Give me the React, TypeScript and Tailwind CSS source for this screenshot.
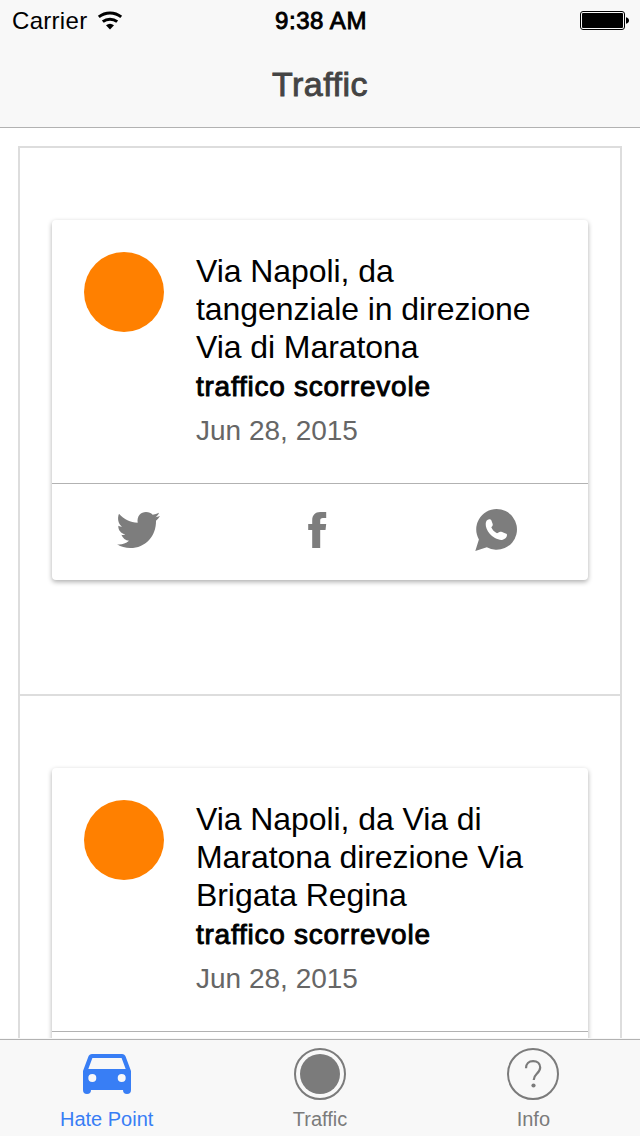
type Report = { place: string[]; status: string; date: string };

const reports: Report[] = [
  {
    place: ["Via Napoli, da", "tangenziale in direzione", "Via di Maratona"],
    status: "traffico scorrevole",
    date: "Jun 28, 2015",
  },
  {
    place: ["Via Napoli, da Via di", "Maratona direzione Via", "Brigata Regina"],
    status: "traffico scorrevole",
    date: "Jun 28, 2015",
  },
];

function WifiIcon() {
  return (
    <svg width="26" height="20" viewBox="0 0 26 20" fill="none" stroke="#000">
      <path d="M1.800 5.800a18 18 0 0 1 22.400 0" strokeWidth="3" />
      <path d="M5.800 10.700a11.500 11.500 0 0 1 14.400 0" strokeWidth="3" />
      <path d="M13 18.600l-4-4.400a6.500 6.500 0 0 1 8 0z" fill="#000" stroke="none" />
    </svg>
  );
}

function BatteryIcon() {
  return (
    <svg width="50" height="20" viewBox="0 0 50 20">
      <rect x="0.5" y="0.5" width="44" height="18" rx="2.5" fill="none" stroke="#000" />
      <rect x="2" y="2" width="41" height="15" rx="1" fill="#000" />
      <path d="M46 6.200q3 .8 3 3.300t-3 3.300z" fill="#000" />
    </svg>
  );
}

function TwitterIcon() {
  return (
    <svg width="43" height="36" viewBox="21 24 129 108" fill="#7d7d7d">
      <path d="M27 29C42 46 61 55 83 56C80 36 93 24 108 24C117 24 123 27 128 32C135 31 141 29 147 26C145 32 141 36 136 40C141 39 145 38 150 36C147 41 143 46 138 50C139 96 106 132 61 132C46 132 33 129 21 121C34 123 46 119 57 110C47 109 38 102 34 92C38 93 42 93 46 91C33 88 24 78 25 65C29 67 32 68 36 68C25 60 21 43 27 29Z" />
    </svg>
  );
}

function FacebookIcon() {
  return (
    <svg width="20" height="36" viewBox="0 0 20 36" fill="#7d7d7d">
      <path d="M18.200 6H15c-2.200 0-2.800 1-2.800 2.800V12h6l-.7 6h-5.300v18H4.200V18H.2v-6h4V8.500C4.200 3 7.300 0 12.200 0h6z" />
    </svg>
  );
}

function WhatsappIcon() {
  return (
    <svg width="44" height="44" viewBox="0 0 44 44">
      <path
        d="M21.600 1a20.400 20.400 0 1 1-9.800 38.300L.3 43.100l3.600-11.600A20.400 20.400 0 0 1 21.600 1z"
        fill="#7d7d7d"
      />
      <path
        d="M10.700 15.800c.1-2.600 1.500-4.400 3.500-4.500 1.200-.1 1.900.4 2.300 1.500l1.200 3.300c.2.700.1 1.200-.3 1.800l-1.100 1.400c1 2.500 3 4.700 5.700 6 .8-.2 1.400-1.300 2.700-1.400 1.300-.2 2.700.3 4.700 1 1.900.6 2.600 1 2.600 1.900 0 2.700-2.300 4.900-5.200 5.100-4.200.2-9.200-2.500-12.300-6.300-2.300-2.800-4-6.800-3.800-9.800z"
        fill="#fff"
      />
    </svg>
  );
}

function CarIcon() {
  return (
    <svg width="48" height="40" viewBox="0 0 48 40">
      <path
        fill="#387ef5"
        fillRule="evenodd"
        d="M9 0h30c1.800 0 3 .9 3.600 2.400L48 17v19a4 4 0 0 1-8 0H8a4 4 0 0 1-8 0V17L5.400 2.400C6 .9 7.200 0 9 0zM9.400 4L5.300 15h37.400L38.600 4zM9.300 20a4 4 0 1 0 0 8 4 4 0 0 0 0-8zm29.400 0a4 4 0 1 0 0 8 4 4 0 0 0 0-8z"
      />
    </svg>
  );
}

function RecordIcon() {
  return (
    <svg width="52" height="52" viewBox="0 0 52 52">
      <circle cx="26" cy="26" r="25" fill="none" stroke="#7b7b7b" strokeWidth="2" />
      <circle cx="26" cy="26" r="20" fill="#7b7b7b" />
    </svg>
  );
}

function HelpIcon() {
  return (
    <svg width="52" height="52" viewBox="0 0 52 52" fill="none" stroke="#7b7b7b">
      <circle cx="26" cy="26" r="25" strokeWidth="2" />
      <path
        d="M19 20.200c0-4.400 2.800-7 7.100-7 4.200 0 7.100 2.500 7.100 6.300 0 2.700-1.200 4.200-3.600 6.500-2.300 2.200-2.900 3.100-2.900 6"
        strokeWidth="2.2"
      />
      <circle cx="26.500" cy="37.500" r="2.100" fill="#7b7b7b" stroke="none" />
    </svg>
  );
}

function ReportCard({ report }: { report: Report }) {
  return (
    <article className="h-[360px] rounded-[4px] bg-white shadow-[0_2px_5px_rgba(0,0,0,0.32)]">
      <div className="flex h-[263px] gap-8 p-8">
        <div className="size-20 shrink-0 rounded-full bg-[#ff8000]" />
        <div className="whitespace-nowrap">
          <h2 className="text-[32px] leading-[38px] tracking-[-0.07px]">
            {report.place.map((line) => (
              <span key={line} className="block">
                {line}
              </span>
            ))}
          </h2>
          <h3 className="mt-1 text-[28px] leading-[34px] tracking-[0.75px] [-webkit-text-stroke:0.9px_#000]">
            {report.status}
          </h3>
          <p className="mt-[10px] text-[28px] leading-[34px] text-[#666]">{report.date}</p>
        </div>
      </div>
      <div className="flex h-[97px] justify-between border-t border-[#b2b2b2] pt-6 pr-[69px] pl-[65px]">
        <div className="pt-1">
          <TwitterIcon />
        </div>
        <div className="pt-1">
          <FacebookIcon />
        </div>
        <WhatsappIcon />
      </div>
    </article>
  );
}

export default function App() {
  return (
    <div className="flex h-[1136px] w-[640px] flex-col overflow-hidden bg-white font-['Liberation_Sans',Arial,sans-serif] text-black">
      <header className="h-32 shrink-0 border-b border-[#b2b2b2] bg-[#f8f8f8]">
        <div className="grid h-[42px] grid-cols-3 items-center pr-2.5 pl-3 text-[24px]">
          <div className="flex items-center gap-2.5">
            <span className="tracking-[0.3px]">Carrier</span>
            <WifiIcon />
          </div>
          <span className="text-center tracking-[0.55px] [-webkit-text-stroke:0.9px_#000]">9:38 AM</span>
          <div className="flex justify-end">
            <BatteryIcon />
          </div>
        </div>
        <h1 className="text-center text-[34px] leading-[84px] tracking-[0.5px] text-[#444] [-webkit-text-stroke:0.9px_#444]">
          Traffic
        </h1>
      </header>

      <main className="min-h-0 flex-1 overflow-hidden px-[18px] pt-[18px]">
        {reports.map((report, index) => (
          <section
            key={index}
            className="h-[548px] border-x-2 border-t-2 border-[#ddd] px-8 pt-[72px]"
          >
            <ReportCard report={report} />
          </section>
        ))}
      </main>

      <nav className="h-[98px] shrink-0 bg-[#f8f8f8] pt-px text-[20px] text-[#7b7b7b]">
        <div className="grid h-full grid-cols-3 border-t border-[#b2b2b2]">
          <div className="flex flex-col items-center text-[#387ef5]">
            <div className="flex h-[68px] items-center">
              <CarIcon />
            </div>
            <span className="-mt-px leading-6">Hate Point</span>
          </div>
          <div className="flex flex-col items-center">
            <div className="flex h-[68px] items-center">
              <RecordIcon />
            </div>
            <span className="-mt-px leading-6">Traffic</span>
          </div>
          <div className="flex flex-col items-center">
            <div className="flex h-[68px] items-center">
              <HelpIcon />
            </div>
            <span className="-mt-px leading-6">Info</span>
          </div>
        </div>
      </nav>
    </div>
  );
}
